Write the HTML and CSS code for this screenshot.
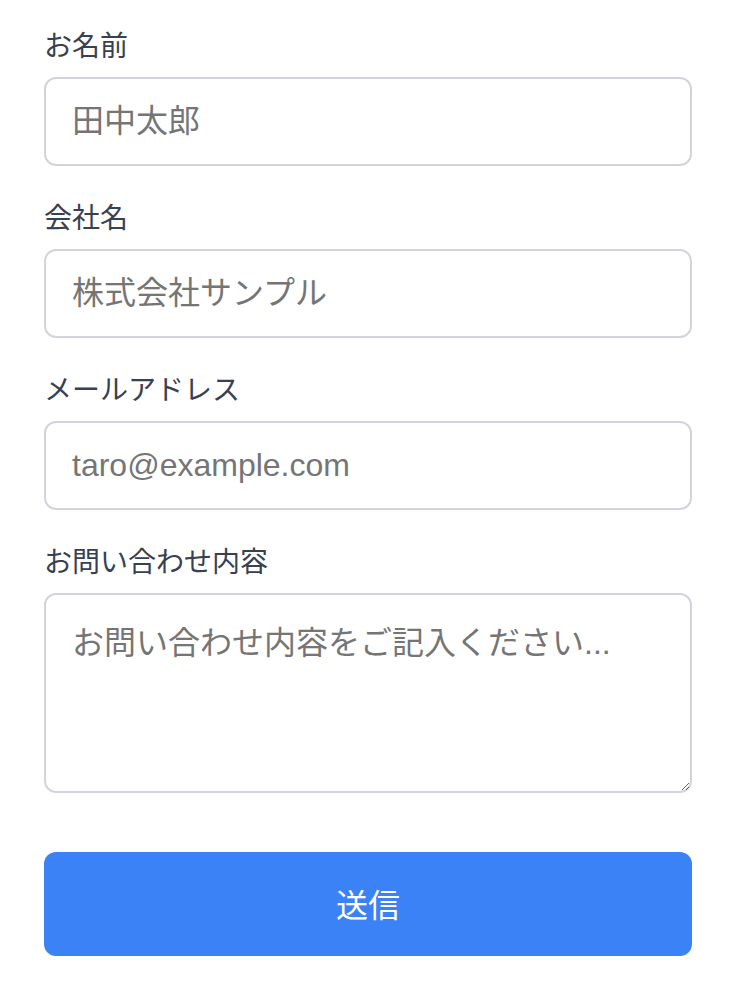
FILE: index.html
```html
<!DOCTYPE html>
<html lang="ja">
<head>
	<meta charset="UTF-8">
	<title>お問い合わせ</title>
	<link rel="stylesheet" href="styles.css">
</head>
<body>
	<form class="contact">
		<div class="field">
			<label for="name">お名前</label>
			<input class="input" id="name" type="text" placeholder="田中太郎">
		</div>
		<div class="field">
			<label for="company">会社名</label>
			<input class="input" id="company" type="text" placeholder="株式会社サンプル">
		</div>
		<div class="field">
			<label for="email">メールアドレス</label>
			<input class="input" id="email" type="email" placeholder="taro@example.com">
		</div>
		<div class="field">
			<label for="message">お問い合わせ内容</label>
			<textarea class="input textarea" id="message" placeholder="お問い合わせ内容をご記入ください..."></textarea>
		</div>
		<button class="submit" type="submit">送信</button>
	</form>
</body>
</html>
```

FILE: styles.css
```css
html, body {
	margin: 0;
	padding: 0;
	background: #fff;
}
body {
	font-family: "Liberation Sans", "Noto Sans CJK JP", sans-serif;
}
.contact {
	width: 648px;
	margin-left: 44px;
	padding-top: 26px;
	display: flex;
	flex-direction: column;
}
.field {
	display: flex;
	flex-direction: column;
	margin-bottom: 32px;
}
.field label {
	font-size: 28px;
	line-height: 42px;
	color: #374151;
	margin-bottom: 9px;
}
.input {
	box-sizing: border-box;
	width: 100%;
	height: 89px;
	border: 2px solid #d1d5db;
	border-radius: 12px;
	padding: 0 26px;
	font-family: inherit;
	font-size: 32px;
	color: #111827;
	background: #fff;
	outline: none;
}
.input::placeholder {
	color: #757575;
}
.textarea {
	height: 200px;
	padding: 22px 26px;
	line-height: 52px;
	resize: vertical;
}
.submit {
	margin-top: 27px;
	height: 104px;
	padding-bottom: 4px;
	border: none;
	border-radius: 12px;
	background: #3b82f6;
	color: #fff;
	font-family: inherit;
	font-size: 32px;
	cursor: pointer;
}
```
